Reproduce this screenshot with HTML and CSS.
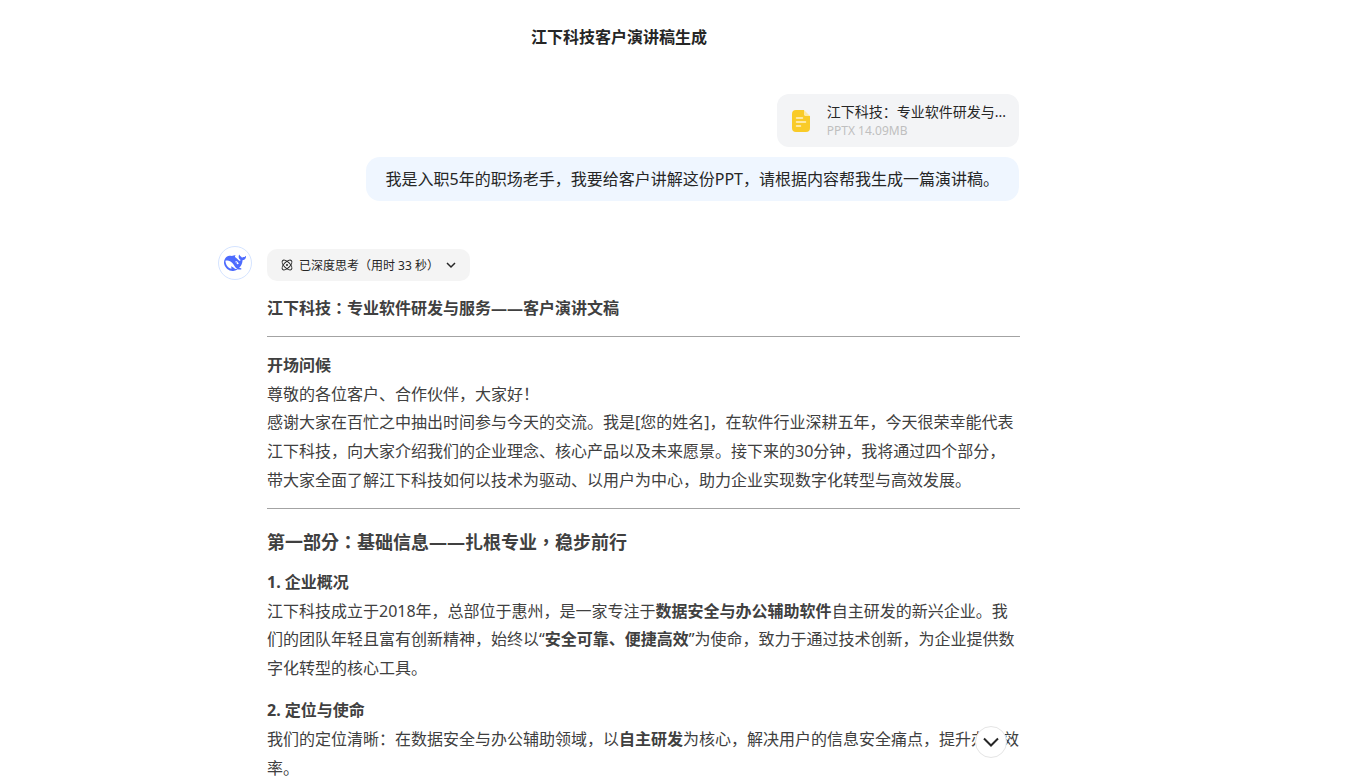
FILE: index.html
```html
<!DOCTYPE html>
<html lang="zh-CN">
<head>
    <meta charset="UTF-8">
    <meta name="viewport" content="width=device-width, initial-scale=1.0">
    <title>江下科技客户演讲稿生成</title>
    <link rel="stylesheet" href="styles.css">
</head>
<body>
    <div class="page">
        <header class="header">
            <h1>江下科技客户演讲稿生成</h1>
        </header>

        <main class="chat">
            <section class="question">
                <div class="file-card">
                    <svg class="file-icon" viewBox="0 0 20 24">
                        <path fill="#f9cb28" d="M5 1h8v3.5A2.5 2.5 0 0 0 15.500 7H19v12a4 4 0 0 1-4 4H5a4 4 0 0 1-4-4V5a4 4 0 0 1 4-4z"/>
                        <path fill="#fde9a6" d="M13 1l6 6h-3.500A2.500 2.500 0 0 1 13 4.500z"/>
                        <path stroke="#fff3cd" stroke-width="1.500" stroke-linecap="round" d="M5.500 9h6M5.500 13h9M5.500 17h4"/>
                    </svg>
                    <div class="file-info">
                        <p class="file-name">江下科技：专业软件研发与...</p>
                        <p class="file-size">PPTX 14.09MB</p>
                    </div>
                </div>
                <p class="bubble">我是入职5年的职场老手，我要给客户讲解这份PPT，请根据内容帮我生成一篇演讲稿。</p>
            </section>

            <section class="answer">
                <div class="avatar">
                    <svg viewBox="0 0 24 24" width="22" height="22" fill="#4d6bfe">
                        <path d="M23.748 4.482c-.254-.124-.364.113-.512.234-.051.039-.094.09-.137.136-.372.397-.806.657-1.373.626-.829-.046-1.537.214-2.163.848-.133-.782-.575-1.248-1.247-1.548-.352-.156-.708-.311-.955-.65-.172-.241-.219-.51-.305-.774-.055-.16-.11-.323-.293-.35-.2-.031-.278.136-.356.276-.313.572-.434 1.202-.422 1.84.027 1.436.633 2.58 1.838 3.393.137.093.172.187.129.323-.082.28-.18.552-.266.833-.055.179-.137.217-.329.14a5.526 5.526 0 0 1-1.736-1.18c-.857-.828-1.631-1.742-2.597-2.458a11.365 11.365 0 0 0-.689-.471c-.985-.957.13-1.743.388-1.836.27-.098.093-.432-.779-.428-.872.004-1.67.295-2.687.684a3.055 3.055 0 0 1-.465.137 9.597 9.597 0 0 0-2.883-.102c-1.885.21-3.39 1.102-4.497 2.623C.082 8.606-.231 10.684.152 12.85c.403 2.284 1.569 4.175 3.36 5.653 1.858 1.533 3.997 2.284 6.438 2.14 1.482-.085 3.133-.284 4.994-1.86.47.234.962.327 1.78.397.63.059 1.236-.03 1.705-.128.735-.156.684-.837.419-.961-2.155-1.004-1.682-.595-2.113-.926 1.096-1.296 2.746-2.642 3.392-7.003.05-.347.007-.565 0-.845-.004-.17.035-.237.23-.256a4.173 4.173 0 0 0 1.545-.475c1.396-.763 1.96-2.015 2.093-3.517.02-.23-.004-.467-.247-.588zM11.581 18c-2.089-1.642-3.102-2.183-3.52-2.16-.392.024-.321.471-.235.763.09.288.207.486.371.739.114.167.192.416-.113.603-.673.416-1.842-.14-1.897-.167-1.361-.802-2.5-1.86-3.301-3.307-.774-1.393-1.224-2.887-1.298-4.482-.02-.386.093-.522.477-.592a4.696 4.696 0 0 1 1.529-.039c2.132.312 3.946 1.265 5.468 2.774.868.86 1.525 1.887 2.202 2.891.72 1.066 1.494 2.082 2.48 2.914.348.292.625.514.891.677-.802.09-2.14.11-3.054-.614zm1-6.44a.306.306 0 0 1 .415-.287.302.302 0 0 1 .2.288.306.306 0 0 1-.31.307.303.303 0 0 1-.304-.308zm3.11 1.596c-.2.081-.399.151-.59.16a1.245 1.245 0 0 1-.798-.254c-.274-.23-.47-.358-.552-.758a1.73 1.73 0 0 1 .016-.588c.07-.327-.008-.537-.239-.727-.187-.156-.426-.199-.688-.199a.559.559 0 0 1-.254-.078c-.11-.054-.2-.19-.114-.358.028-.054.16-.186.192-.21.356-.202.767-.136 1.146.016.352.144.618.408 1.001.782.391.451.462.576.685.914.176.265.336.537.445.848.067.195-.019.354-.25.452z"/>
                    </svg>
                </div>
                <div class="answer-body">
                    <button type="button" class="think">
                        <svg viewBox="0 0 12 12" width="12" height="12" fill="none" stroke="#262626">
                            <ellipse cx="6" cy="6" rx="6.200" ry="3" transform="rotate(45 6 6)"/>
                            <ellipse cx="6" cy="6" rx="6.200" ry="3" transform="rotate(-45 6 6)"/>
                            <circle cx="6" cy="6" r="1" fill="#262626" stroke="none"/>
                        </svg>
                        <span>已深度思考（用时 33 秒）</span>
                        <svg viewBox="0 0 12 12" width="12" height="12" fill="none" stroke="#262626" stroke-width="1.500">
                            <path d="M2 4l4 4 4-4"/>
                        </svg>
                    </button>

                    <p class="title"><strong>江下科技：专业软件研发与服务——客户演讲文稿</strong></p>
                    <hr>
                    <p><strong>开场问候</strong><br>
                    尊敬的各位客户、合作伙伴，大家好！<br>
                    感谢大家在百忙之中抽出时间参与今天的交流。我是[您的姓名]，在软件行业深耕五年，今天很荣幸能代表江下科技，向大家介绍我们的企业理念、核心产品以及未来愿景。接下来的30分钟，我将通过四个部分，带大家全面了解江下科技如何以技术为驱动、以用户为中心，助力企业实现数字化转型与高效发展。</p>
                    <hr>
                    <h3>第一部分：基础信息——扎根专业，稳步前行</h3>
                    <p><strong>1. 企业概况</strong><br>
                    江下科技成立于2018年，总部位于惠州，是一家专注于<strong>数据安全与办公辅助软件</strong>自主研发的新兴企业。我们的团队年轻且富有创新精神，始终以“<strong>安全可靠、便捷高效</strong>”为使命，致力于通过技术创新，为企业提供数字化转型的核心工具。</p>
                    <p><strong>2. 定位与使命</strong><br>
                    我们的定位清晰：在数据安全与办公辅助领域，以<strong>自主研发</strong>为核心，解决用户的信息安全痛点，提升办公效率。</p>
                </div>
            </section>

            <button type="button" class="to-bottom" aria-label="回到底部">
                <svg viewBox="0 0 16 16" width="16" height="16" fill="none" stroke="#262626" stroke-width="2">
                    <path d="M1 4.500l7 7 7-7"/>
                </svg>
            </button>
        </main>
    </div>
</body>
</html>
```

FILE: styles.css
```css
* {
    margin: 0;
    padding: 0;
    box-sizing: border-box;
}

body {
    font-family: "Noto Sans", "Noto Sans CJK SC", sans-serif;
    font-size: 16px;
    color: #404040;
    background-color: #fff;
}

.page {
    display: flex;
    flex-direction: column;
    height: 100vh;
    padding-right: 114px;
    overflow: hidden;
}

.header {
    padding: 24px 0;
    text-align: center;
}

.header h1 {
    font-size: 16px;
    line-height: 26px;
    color: #262626;
}

.chat {
    position: relative;
    flex: 1;
    width: 100%;
    max-width: 802px;
    min-height: 0;
    margin: 0 auto;
    padding-top: 20px;
}

.question {
    display: flex;
    flex-direction: column;
    align-items: flex-end;
    gap: 10px;
    padding-right: 1px;
    color: #262626;
}

.file-card {
    display: flex;
    align-items: center;
    gap: 16px;
    padding: 8px 13px 8px 14px;
    border-radius: 12px;
    background-color: #f3f4f6;
}

.file-icon {
    width: 20px;
    height: 24px;
}

.file-name {
    font-size: 14px;
    line-height: 20px;
}

.file-size {
    font-size: 12px;
    line-height: 17px;
    color: #bfbfbf;
}

.bubble {
    padding: 8px 20px;
    border-radius: 14px;
    line-height: 28px;
    background-color: #eff6ff;
}

.answer {
    display: flex;
    align-items: flex-start;
    gap: 15px;
    margin-top: 45px;
}

.avatar {
    display: flex;
    flex-shrink: 0;
    justify-content: center;
    align-items: center;
    width: 34px;
    height: 34px;
    border: 1px solid #d5e4ff;
    border-radius: 50%;
}

.answer-body {
    flex: 1;
    min-width: 0;
    padding-top: 3px;
    line-height: 1.8;
}

.answer-body p {
    margin: 13px 0;
}

.answer-body hr {
    height: 1px;
    margin: 13px 0 14px;
    border: none;
    background-color: #a3a3a3;
}

.answer-body h3 {
    margin: 20px 0 13px;
    font-size: 18px;
    line-height: 26px;
}

/* full-width punctuation sits in the middle in headings */
.answer-body .title,
.answer-body h3 {
    font-family: "Noto Sans", "Noto Sans CJK TC", sans-serif;
    -webkit-locale: "zh-TW";
}

.think {
    display: flex;
    align-items: center;
    gap: 6px;
    height: 32px;
    padding: 0 13px 0 14px;
    border: none;
    border-radius: 10px;
    font-family: inherit;
    font-size: 12px;
    color: #262626;
    background-color: #f4f4f4;
    cursor: pointer;
}

.to-bottom {
    position: absolute;
    right: 13px;
    bottom: 20px;
    display: flex;
    justify-content: center;
    align-items: center;
    width: 32px;
    height: 32px;
    border: 1px solid #e5e5e5;
    border-radius: 50%;
    background-color: #fff;
    cursor: pointer;
}
```
